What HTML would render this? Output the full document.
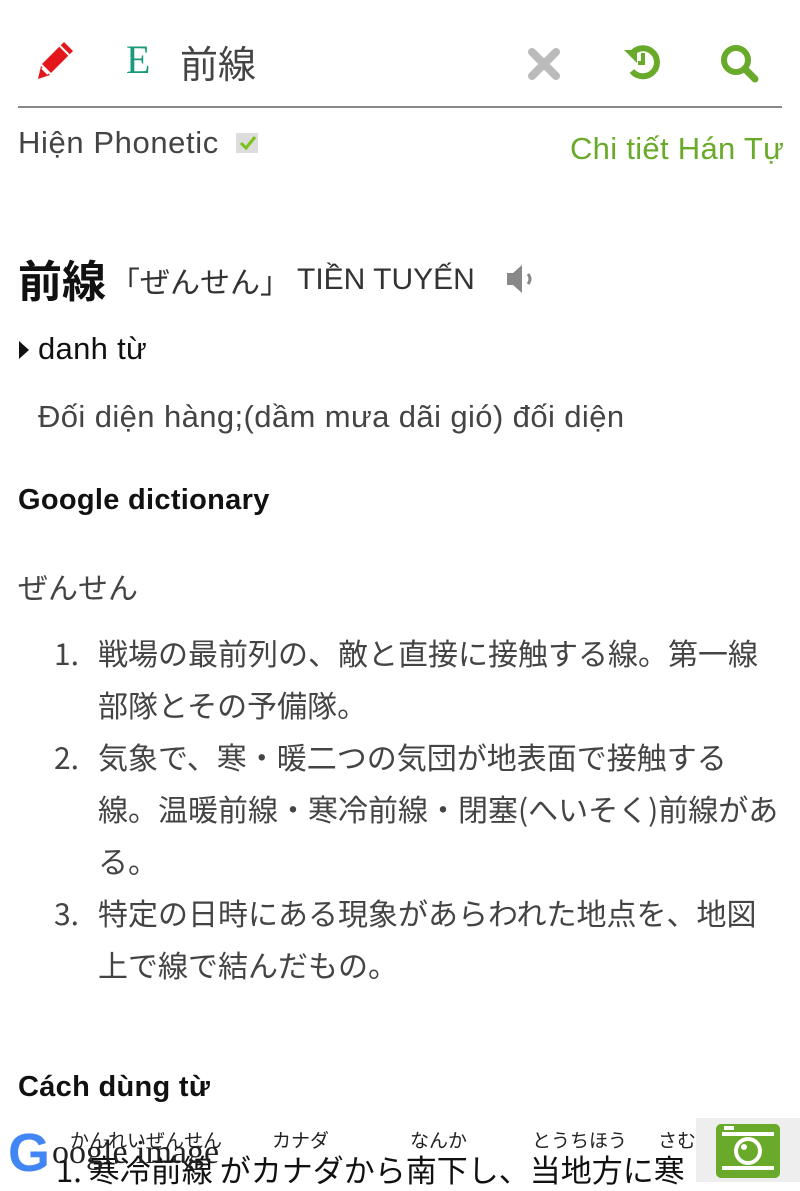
<!DOCTYPE html>
<html><head><meta charset="utf-8"><style>
body{margin:0;width:800px;height:1182px;overflow:hidden;background:#fff;font-family:"Liberation Sans","Noto Sans CJK JP",sans-serif;position:relative;color:#333}
.a{position:absolute;white-space:nowrap}
.jp{font-family:"Noto Sans CJK JP",sans-serif}
</style></head><body>
<svg class="a" style="left:36px;top:40px" width="40" height="40" viewBox="0 0 40 40"><path d="M28 2l9 9-22 22-9-9z" fill="#e5161b"/><path d="M5 26l9 9-12 4z" fill="#e5161b"/><path d="M6 28l6 6" stroke="#fff" stroke-width="2"/><path d="M24 6l9 9" stroke="#fff" stroke-width="2"/></svg>
<div class="a" style="left:126px;top:36px;font-family:'Liberation Serif',serif;font-size:40px;color:#1a9a7a">E</div>
<div class="a jp" style="left:180px;top:34px;font-size:38px;color:#444">前線</div>
<svg class="a" style="left:528px;top:48px" width="32" height="32" viewBox="0 0 32 32"><path d="M4 4L28 28M28 4L4 28" stroke="#bbb" stroke-width="8" stroke-linecap="round"/></svg>
<svg class="a" style="left:622px;top:42px" width="40" height="40" viewBox="0 0 40 40"><path d="M9 13A14 14 0 1 1 10 29" fill="none" stroke="#6aaa2a" stroke-width="6"/><path d="M2 8h13v13z" fill="#6aaa2a"/><path d="M21 11v10h-5" fill="none" stroke="#6aaa2a" stroke-width="4"/></svg>
<svg class="a" style="left:718px;top:42px" width="44" height="42" viewBox="0 0 44 42"><circle cx="18" cy="18" r="12" fill="none" stroke="#6aaa2a" stroke-width="6"/><path d="M27 27l10 10" stroke="#6aaa2a" stroke-width="7" stroke-linecap="round"/></svg>
<div class="a" style="left:18px;top:106px;width:764px;height:2px;background:#888"></div>
<div class="a" style="left:18px;top:125px;font-size:31px;color:#444;letter-spacing:0.6px">Hiện Phonetic</div>
<div class="a" style="left:236px;top:133px;width:22px;height:20px;background:#ddd"></div>
<svg class="a" style="left:238px;top:134px" width="20" height="18" viewBox="0 0 20 18"><path d="M3 9l5 5 9-11" fill="none" stroke="#7cc11a" stroke-width="3"/></svg>
<div class="a" style="left:570px;top:131px;font-size:31px;color:#6aaa2a;letter-spacing:0.3px">Chi tiết Hán Tự</div>
<div class="a jp" style="left:18px;top:246px;font-size:44px;color:#111;font-weight:bold">前線</div>
<div class="a jp" style="left:110px;top:258px;font-size:30px;color:#333">「ぜんせん」</div>
<div class="a" style="left:297px;top:263px;font-size:30px;color:#333">TIỀN TUYẾN</div>
<svg class="a" style="left:505px;top:262px" width="34" height="34" viewBox="0 0 34 34"><path d="M2 11h6l9-8v28l-9-8H2z" fill="#888"/><path d="M23 12q4 5 0 10" fill="none" stroke="#888" stroke-width="3"/></svg>
<svg class="a" style="left:18px;top:340px" width="12" height="20" viewBox="0 0 12 20"><path d="M1 1l10 9-10 9z" fill="#111"/></svg>
<div class="a" style="left:38px;top:331px;font-size:31px;color:#111;letter-spacing:0.3px">danh từ</div>
<div class="a" style="left:38px;top:399px;font-size:31px;color:#444;letter-spacing:0.4px">Đối diện hàng;(dầm mưa dãi gió) đối diện</div>
<div class="a" style="left:18px;top:484px;font-size:29px;color:#111;font-weight:bold;letter-spacing:0.3px">Google dictionary</div>
<div class="a jp" style="left:18px;top:564px;font-size:30px;color:#444">ぜんせん</div>
<div class="a jp" style="left:0;top:626px;width:800px;font-size:30px;line-height:52px;color:#444">
<div style="position:absolute;left:54px;top:0">1.</div><div style="position:absolute;left:98px;top:0">戦場の最前列の、敵と直接に接触する線。第一線<br>部隊とその予備隊。</div>
<div style="position:absolute;left:54px;top:104px">2.</div><div style="position:absolute;left:98px;top:104px">気象で、寒・暖二つの気団が地表面で接触する<br>線。温暖前線・寒冷前線・閉塞(へいそく)前線があ<br>る。</div>
<div style="position:absolute;left:54px;top:260px">3.</div><div style="position:absolute;left:98px;top:260px">特定の日時にある現象があらわれた地点を、地図<br>上で線で結んだもの。</div>
</div>
<div class="a" style="left:18px;top:1071px;font-size:29px;color:#111;font-weight:bold;letter-spacing:0.3px">Cách dùng từ</div>
<div class="a jp" style="left:70px;top:1126px;font-size:19px;color:#222">かんれいぜんせん</div>
<div class="a jp" style="left:272px;top:1126px;font-size:19px;color:#222">カナダ</div>
<div class="a jp" style="left:410px;top:1126px;font-size:19px;color:#222">なんか</div>
<div class="a jp" style="left:532px;top:1126px;font-size:19px;color:#222">とうちほう</div>
<div class="a jp" style="left:658px;top:1126px;font-size:19px;color:#222">さむ</div>
<div class="a jp" style="left:56px;top:1146px;font-size:31px;color:#111">1. 寒冷前線 がカナダから南下し、当地方に寒</div>
<div class="a" style="left:8px;top:1122px;font-size:54px;font-weight:bold;color:#4285f4;font-family:'Liberation Sans',sans-serif">G</div>
<div class="a" style="left:52px;top:1134px;font-family:'Liberation Serif',serif;font-size:34px;color:#222">oogle image</div>
<div class="a" style="left:696px;top:1118px;width:104px;height:64px;background:#eee"></div>
<svg class="a" style="left:714px;top:1122px" width="68" height="58" viewBox="0 0 68 58"><rect x="2" y="2" width="64" height="54" rx="5" fill="#6aaa2a"/><rect x="8" y="10" width="52" height="4" fill="#fff"/><rect x="8" y="44" width="52" height="4" fill="#fff"/><rect x="10" y="4" width="10" height="4" fill="#fff"/><circle cx="34" cy="29" r="12" fill="none" stroke="#fff" stroke-width="4"/><circle cx="30" cy="25" r="3" fill="#fff"/></svg>
</body></html>
